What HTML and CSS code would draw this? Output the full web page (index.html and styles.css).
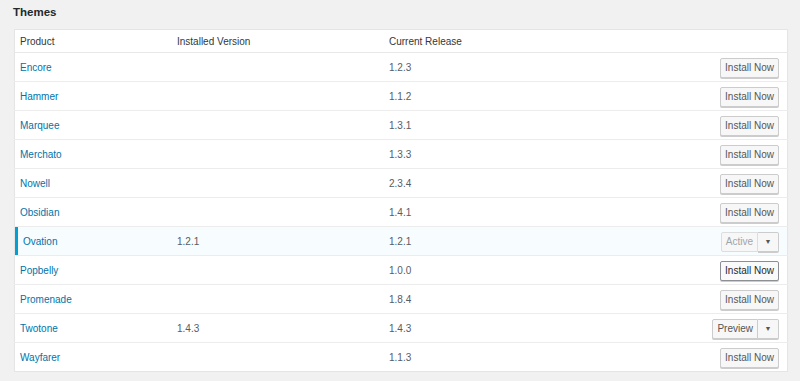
FILE: index.html
```html
<!DOCTYPE html>
<html lang="en">
<head>
    <meta charset="UTF-8">
    <title>Themes</title>
    <link rel="stylesheet" href="styles.css">
</head>
<body>
    <div class="wrap">
        <h2 class="title">Themes</h2>
        <table class="themes">
            <thead>
                <tr>
                    <th class="col-product">Product</th>
                    <th class="col-installed">Installed Version</th>
                    <th class="col-release">Current Release</th>
                    <th class="col-action"></th>
                </tr>
            </thead>
            <tbody>
                <tr>
                    <td><a href="#">Encore</a></td>
                    <td></td>
                    <td>1.2.3</td>
                    <td class="col-action"><button class="button">Install Now</button></td>
                </tr>
                <tr>
                    <td><a href="#">Hammer</a></td>
                    <td></td>
                    <td>1.1.2</td>
                    <td class="col-action"><button class="button">Install Now</button></td>
                </tr>
                <tr>
                    <td><a href="#">Marquee</a></td>
                    <td></td>
                    <td>1.3.1</td>
                    <td class="col-action"><button class="button">Install Now</button></td>
                </tr>
                <tr>
                    <td><a href="#">Merchato</a></td>
                    <td></td>
                    <td>1.3.3</td>
                    <td class="col-action"><button class="button">Install Now</button></td>
                </tr>
                <tr>
                    <td><a href="#">Nowell</a></td>
                    <td></td>
                    <td>2.3.4</td>
                    <td class="col-action"><button class="button">Install Now</button></td>
                </tr>
                <tr>
                    <td><a href="#">Obsidian</a></td>
                    <td></td>
                    <td>1.4.1</td>
                    <td class="col-action"><button class="button">Install Now</button></td>
                </tr>
                <tr class="active">
                    <td><a href="#">Ovation</a></td>
                    <td>1.2.1</td>
                    <td>1.2.1</td>
                    <td class="col-action">
                        <span class="split">
                            <button class="button disabled">Active</button><button class="button toggle">&#9660;</button>
                        </span>
                    </td>
                </tr>
                <tr>
                    <td><a href="#">Popbelly</a></td>
                    <td></td>
                    <td>1.0.0</td>
                    <td class="col-action"><button class="button focus">Install Now</button></td>
                </tr>
                <tr>
                    <td><a href="#">Promenade</a></td>
                    <td></td>
                    <td>1.8.4</td>
                    <td class="col-action"><button class="button">Install Now</button></td>
                </tr>
                <tr>
                    <td><a href="#">Twotone</a></td>
                    <td>1.4.3</td>
                    <td>1.4.3</td>
                    <td class="col-action">
                        <span class="split">
                            <button class="button">Preview</button><button class="button toggle">&#9660;</button>
                        </span>
                    </td>
                </tr>
                <tr>
                    <td><a href="#">Wayfarer</a></td>
                    <td></td>
                    <td>1.1.3</td>
                    <td class="col-action"><button class="button">Install Now</button></td>
                </tr>
            </tbody>
        </table>
    </div>
</body>
</html>
```

FILE: styles.css
```css
body {
    margin: 0;
    background: #f1f1f1;
    font-family: "Liberation Sans", Arial, sans-serif;
    font-size: 10px;
    color: #32373c;
}

.wrap {
    padding: 5px 12px 0 14px;
}

.title {
    margin: 0 0 10px -1px;
    font-size: 11.5px;
    line-height: 14px;
    font-weight: bold;
    color: #23282d;
}

.themes {
    width: 100%;
    border-collapse: collapse;
    background: #fff;
    border: 1px solid #e5e5e5;
    box-shadow: 0 1px 1px rgba(0, 0, 0, 0.04);
}

.themes th {
    height: 22px;
    padding: 0 5px;
    text-align: left;
    font-weight: normal;
    color: #32373c;
    border-bottom: 1px solid #e8e8e8;
}

.themes td {
    height: 28px;
    padding: 0 5px;
    color: #555d66;
    border-bottom: 1px solid #ececec;
}

.themes tr:last-child td {
    border-bottom: none;
}

.col-product {
    width: 147px;
}

.col-installed {
    width: 202px;
}

.themes td.col-action {
    height: 26px;
    text-align: right;
    padding: 2px 8px 0 5px;
}

.themes a {
    color: #0073aa;
    text-decoration: none;
}

.active td {
    background: #f7fcfe;
}

.active td:first-child {
    padding-left: 8px;
    box-shadow: inset 3px 0 0 #00a0d2;
}

.button {
    height: 20px;
    margin: 0;
    padding: 0 4px;
    font-family: inherit;
    font-size: 10px;
    line-height: 18px;
    color: #555;
    background: #f7f7f7;
    border: 1px solid #ccc;
    border-radius: 2px;
    box-shadow: 0 1px 0 #ccc;
    vertical-align: middle;
    cursor: pointer;
}

.button.focus {
    border-color: #8c8f94;
    color: #23282d;
    background: #fafafa;
}

.button.disabled {
    color: #a0a5aa;
    border-color: #ddd;
    box-shadow: none;
    background: #f7f7f7;
}

.split {
    display: inline-flex;
    vertical-align: middle;
}

.split .button:first-child {
    border-radius: 2px 0 0 2px;
}

.split .toggle {
    width: 21px;
    padding: 0;
    font-size: 7px;
    color: #555;
    border-left: none;
    border-radius: 0 2px 2px 0;
}
```
